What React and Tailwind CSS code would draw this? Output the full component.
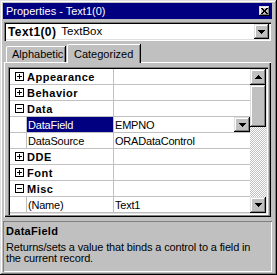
import React from "react";

const raised =
  "shadow-[inset_-1px_-1px_#000,inset_1px_1px_#dfdfdf,inset_-2px_-2px_#808080,inset_2px_2px_#fff]";
const sunken =
  "shadow-[inset_1px_1px_#808080,inset_2px_2px_#000,inset_-1px_-1px_#fff,inset_-2px_-2px_#dfdfdf]";

function ArrowDown() {
  return (
    <svg width="7" height="4" viewBox="0 0 7 4">
      <path d="M0 0h7v1H0zM1 1h5v1H1zM2 2h3v1H2zM3 3h1v1H3z" fill="#000" />
    </svg>
  );
}

function ArrowUp() {
  return (
    <svg width="7" height="4" viewBox="0 0 7 4">
      <path d="M3 0h1v1H3zM2 1h3v1H2zM1 2h5v1H1zM0 3h7v1H0z" fill="#000" />
    </svg>
  );
}

function DropButton({ className = "" }) {
  return (
    <div className={`flex items-center justify-center bg-[#c0c0c0] ${raised} ${className}`}>
      <ArrowDown />
    </div>
  );
}

function Toggle({ open }) {
  return (
    <svg width="9" height="9" viewBox="0 0 9 9">
      <rect x="0.5" y="0.5" width="8" height="8" fill="#fff" stroke="#000" />
      <path d="M2 4h5v1H2z" fill="#000" />
      {!open && <path d="M4 2h1v5H4z" fill="#000" />}
    </svg>
  );
}

function Category({ name, open }) {
  return (
    <div className="flex h-[16px] border-b border-[#c0c0c0]">
      <div className="w-[16px] flex items-center pl-[5px]">
        <Toggle open={open} />
      </div>
      <div className="w-[88px] border-r border-[#c0c0c0] pl-[1px] font-bold tracking-[0.5px] leading-[16px]">
        {name}
      </div>
      <div className="flex-1" />
    </div>
  );
}

function Prop({ name, value, selected }) {
  return (
    <div className="flex h-[16px] border-b border-[#c0c0c0]">
      <div className="w-[16px]" />
      <div className="w-[88px] border-x border-[#c0c0c0]">
        <div
          className={`h-full pl-[1px] leading-[16px] tracking-[-0.2px] ${
            selected ? "bg-[#000080] text-white" : ""
          }`}
        >
          {name}
        </div>
      </div>
      <div className="flex-1 flex min-w-0">
        <div className="flex-1 pl-[1px] leading-[16px] tracking-[-0.2px] whitespace-nowrap overflow-hidden">
          {value}
        </div>
        {selected && <DropButton className="w-[16px] h-[15px]" />}
      </div>
    </div>
  );
}

function Scrollbar() {
  return (
    <div className="w-[16px] flex flex-col">
      <div className={`h-[16px] flex items-center justify-center bg-[#c0c0c0] ${raised}`}>
        <ArrowUp />
      </div>
      <div className={`h-[42px] bg-[#c0c0c0] ${raised}`} />
      <div className="flex-1 bg-[repeating-conic-gradient(#fff_0_25%,#c0c0c0_0_50%)] bg-[length:2px_2px]" />
      <div className={`h-[16px] flex items-center justify-center bg-[#c0c0c0] ${raised}`}>
        <ArrowDown />
      </div>
    </div>
  );
}

export default function App() {
  return (
    <div
      className={`w-[277px] h-[275px] bg-[#c0c0c0] pt-[3px] pl-[3px] pr-[5px] font-['Liberation_Sans',Arial,sans-serif] text-[11px] text-black overflow-hidden ${raised}`}
    >
      {/* title bar */}
      <div className="h-[16px] bg-[#000080] flex items-center justify-between pl-[3px] pr-[2px]">
        <span className="text-white leading-[16px]">Properties - Text1(0)</span>
        <div className={`w-[11px] h-[10px] bg-[#c0c0c0] flex items-center justify-center ${raised}`}>
          <svg width="7" height="6" viewBox="0 0 7 6">
            <path
              d="M0 0h2v1H0zM5 0h2v1H5zM1 1h2v1H1zM4 1h2v1H4zM2 2h3v2H2zM1 4h2v1H1zM4 4h2v1H4zM0 5h2v1H0zM5 5h2v1H5z"
              fill="#000"
            />
          </svg>
        </div>
      </div>

      {/* object combo */}
      <div className={`mt-[3px] mx-[1px] h-[19px] bg-white flex items-center pl-[4px] pr-[2px] ${sunken}`}>
        <span className="font-bold text-[12px] tracking-[0.4px]">Text1(0)</span>
        <span className="ml-[5px] text-[11.5px]">TextBox</span>
        <div className="flex-1" />
        <DropButton className="w-[15px] h-[15px]" />
      </div>

      {/* tabs */}
      <div className="mx-[1px] mt-[2px] h-[19px] flex items-end pl-[2px] relative z-10">
        <div className="h-[16px] w-[59px] bg-[#c0c0c0] border-l border-t border-white rounded-tl-[2px] shadow-[inset_-1px_0_#808080,1px_0_#000] flex items-center pl-[5px]">
          Alphabetic
        </div>
        <div className="h-[19px] w-[73px] ml-[2px] -mb-[1px] bg-[#c0c0c0] border-l border-t border-white rounded-tl-[2px] shadow-[inset_-1px_0_#808080,1px_0_#000] flex items-center pl-[6px]">
          Categorized
        </div>
      </div>

      {/* tab page */}
      <div className="mx-[1px] h-[155px] border-l border-t border-white shadow-[inset_-1px_-1px_#000,inset_-2px_-2px_#808080] pt-[4px] pl-[3px] pr-[3px]">
        <div className={`h-[148px] p-[2px] ${sunken} bg-white flex`}>
          <div className="flex-1 flex flex-col">
            <Category name="Appearance" />
            <Category name="Behavior" />
            <Category name="Data" open />
            <Prop name="DataField" value="EMPNO" selected />
            <Prop name="DataSource" value="ORADataControl" />
            <Category name="DDE" />
            <Category name="Font" />
            <Category name="Misc" open />
            <Prop name="(Name)" value="Text1" />
          </div>
          <Scrollbar />
        </div>
      </div>

      {/* description */}
      <div className="mt-[4px] h-[51px] shadow-[inset_1px_1px_#808080,inset_-1px_-1px_#fff] pt-[4px] pl-[3px]">
        <div className="font-bold leading-[12px] tracking-[0.3px]">DataField</div>
        <div className="mt-[5px] leading-[11px] tracking-[-0.15px]">
          Returns/sets a value that binds a control to a field in
          <br />
          the current record.
        </div>
      </div>
    </div>
  );
}
